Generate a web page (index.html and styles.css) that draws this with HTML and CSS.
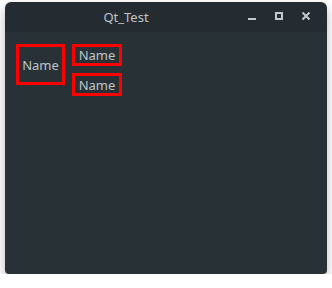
FILE: index.html
```html
<!DOCTYPE html>
<html lang="en">
<head>
  <meta charset="UTF-8">
  <title>Qt_Test</title>
  <link rel="stylesheet" href="styles.css">
</head>
<body>

<div class="window">
  <!-- title bar -->
  <div class="titlebar">
    <div class="title">Qt_Test</div>
    <div class="buttons">
      <svg class="btn" width="10" height="10" viewBox="0 0 10 10">
        <rect x="1" y="6" width="8" height="2" fill="#c3c8cb"/>
      </svg>
      <svg class="btn" width="10" height="10" viewBox="0 0 10 10">
        <rect x="2" y="1" width="6" height="6" fill="none" stroke="#c3c8cb" stroke-width="2"/>
      </svg>
      <svg class="btn" width="10" height="10" viewBox="0 0 10 10">
        <path d="M1.5 0.5 L8.5 7.5 M8.5 0.5 L1.5 7.5" stroke="#c3c8cb" stroke-width="2"/>
      </svg>
    </div>
  </div>

  <!-- client area -->
  <div class="content">
    <div class="label big">Name</div>
    <div class="column">
      <div class="label small">Name</div>
      <div class="label small second">Name</div>
    </div>
  </div>
</div>

</body>
</html>
```

FILE: styles.css
```css
html, body {
  margin: 0;
  padding: 0;
  background-color: #ffffff;
  font-family: 'Noto Sans', sans-serif;
}

.window {
  width: 322px;
  height: 272px;
  margin: 2px 0 0 5px;
  border-radius: 6px 6px 4px 4px;
  overflow: hidden;
  display: flex;
  flex-direction: column;
  box-shadow: 0 5px 12px rgba(0, 0, 0, 0.28);
}

.titlebar {
  height: 30px;
  flex: none;
  display: flex;
  align-items: center;
  background-color: #242c31;
}

.title {
  width: 242px;
  text-align: center;
  color: #bfc4c8;
  font-size: 13px;
}

.buttons {
  display: flex;
  gap: 17px;
}

.btn {
  display: block;
}

.content {
  flex: 1;
  background-color: #283136;
  display: flex;
  align-items: flex-start;
  gap: 7px;
  padding: 12px 11px;
}

.column {
  display: flex;
  flex-direction: column;
  gap: 7px;
}

.label {
  box-sizing: border-box;
  border: 3px solid #ff0000;
  color: #bfc5c9;
  font-size: 13px;
  display: flex;
  align-items: center;
  justify-content: center;
}

.big {
  width: 49px;
  height: 41px;
}

.small {
  width: 50px;
  height: 22px;
}

.second {
  height: 23px;
}
```
